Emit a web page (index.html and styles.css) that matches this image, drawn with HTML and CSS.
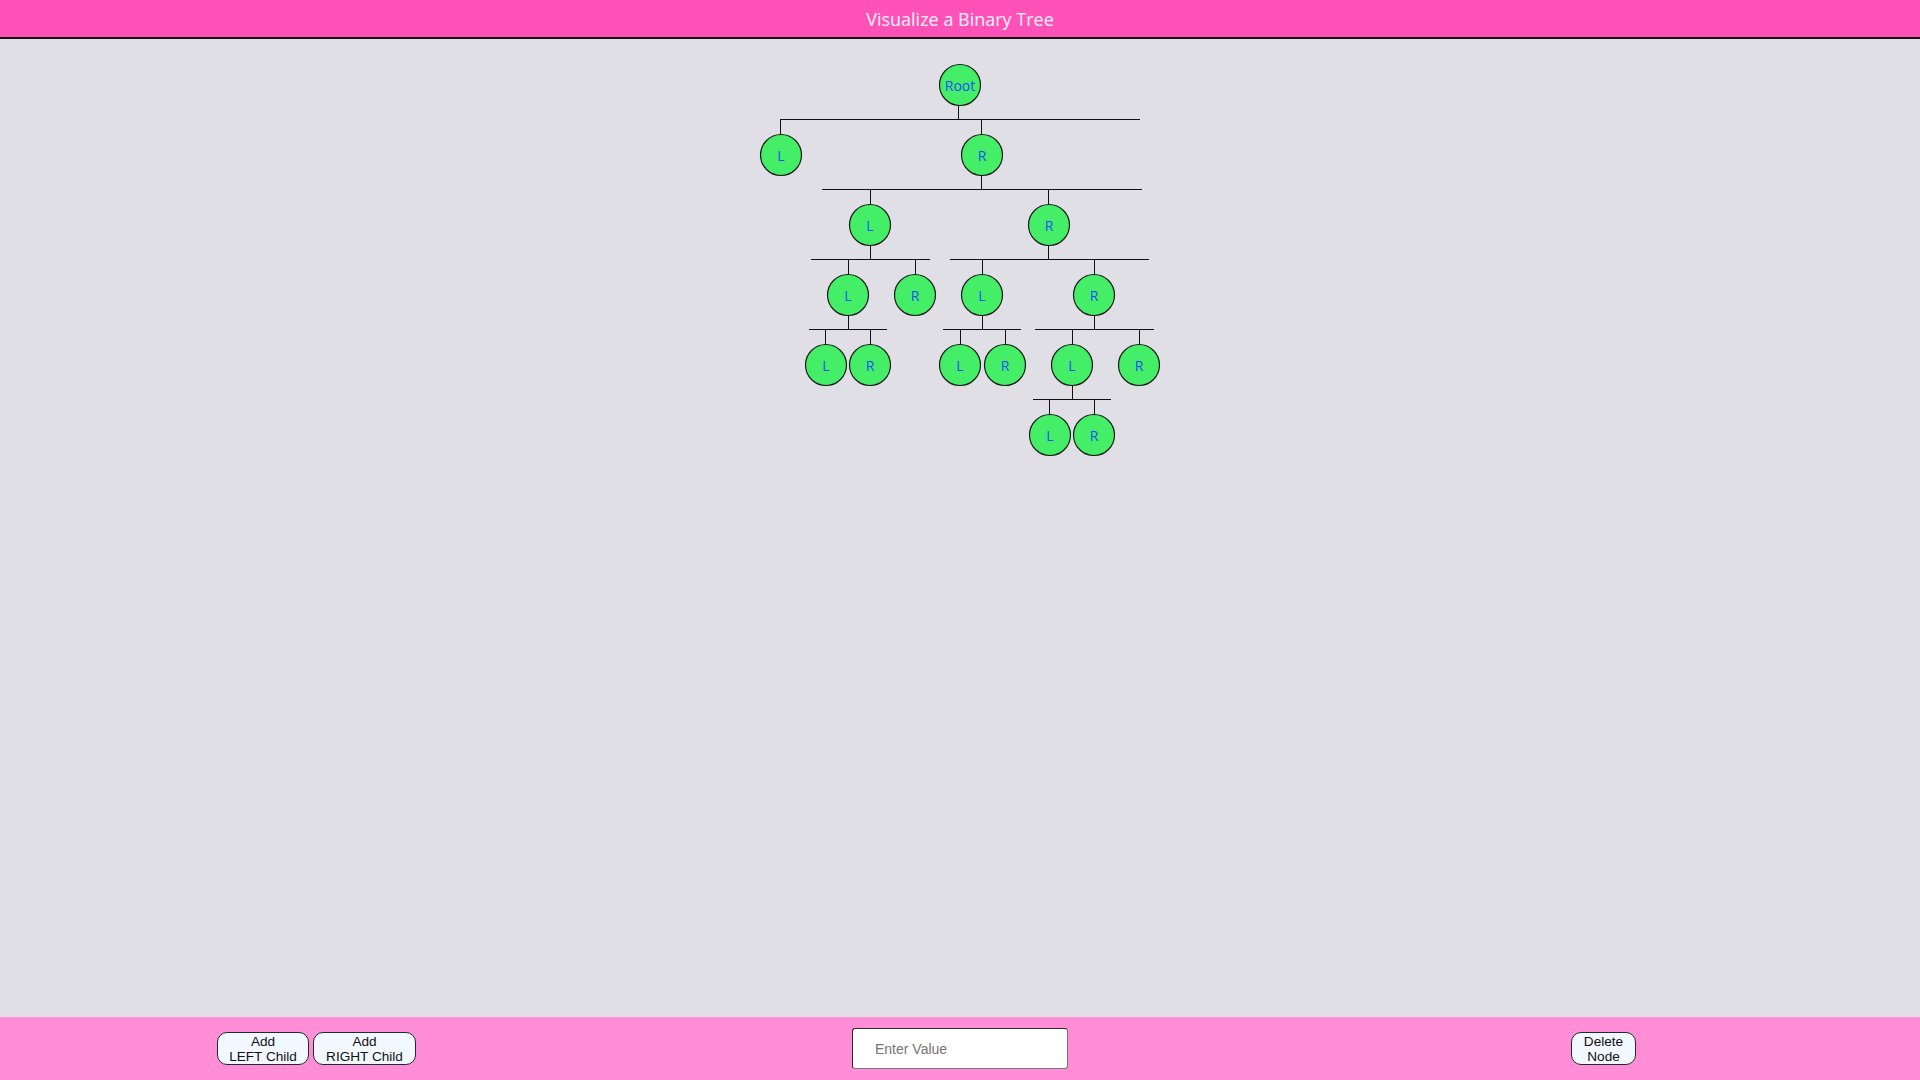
FILE: index.html
```html
<!DOCTYPE html>
<html lang="en">
<head>
<meta charset="utf-8">
<title>Visualize a Binary Tree</title>
<link rel="stylesheet" href="styles.css">
</head>
<body>
<div class="app">
  <header class="topbar">Visualize a Binary Tree</header>
  <main class="stage">
    <svg class="tree" width="1920" height="978" viewBox="0 39 1920 978" xmlns="http://www.w3.org/2000/svg">
      <g class="links">
        <path d="M780 119.5H1140 M822 189.5H1142 M811 259.5H930 M950 259.5H1149 M809 329.5H887 M943 329.5H1021 M1035 329.5H1154 M1033 399.5H1111"/>
        <path d="M958.5 105V119 M780.5 119V135 M981.5 119V135
                 M981.5 175V189 M870.5 189V205 M1048.5 189V205
                 M870.5 245V259 M1048.5 245V259 M848.5 259V275 M915.5 259V275 M982.5 259V275 M1094.5 259V275
                 M848.5 315V329 M982.5 315V329 M1094.5 315V329 M825.5 329V345 M870.5 329V345 M960.5 329V345 M1005.5 329V345 M1072.5 329V345 M1139.5 329V345
                 M1072.5 385V399 M1049.5 399V415 M1094.5 399V415"/>
      </g>
      <g class="node"><circle cx="960" cy="85" r="20.5"/><text x="960" y="85">Root</text></g>
      <g class="node"><circle cx="781" cy="155" r="20.5"/><text x="781" y="155">L</text></g>
      <g class="node"><circle cx="982" cy="155" r="20.5"/><text x="982" y="155">R</text></g>
      <g class="node"><circle cx="870" cy="225" r="20.5"/><text x="870" y="225">L</text></g>
      <g class="node"><circle cx="1049" cy="225" r="20.5"/><text x="1049" y="225">R</text></g>
      <g class="node"><circle cx="848" cy="295" r="20.5"/><text x="848" y="295">L</text></g>
      <g class="node"><circle cx="915" cy="295" r="20.5"/><text x="915" y="295">R</text></g>
      <g class="node"><circle cx="982" cy="295" r="20.5"/><text x="982" y="295">L</text></g>
      <g class="node"><circle cx="1094" cy="295" r="20.5"/><text x="1094" y="295">R</text></g>
      <g class="node"><circle cx="826" cy="365" r="20.5"/><text x="826" y="365">L</text></g>
      <g class="node"><circle cx="870" cy="365" r="20.5"/><text x="870" y="365">R</text></g>
      <g class="node"><circle cx="960" cy="365" r="20.5"/><text x="960" y="365">L</text></g>
      <g class="node"><circle cx="1005" cy="365" r="20.5"/><text x="1005" y="365">R</text></g>
      <g class="node"><circle cx="1072" cy="365" r="20.5"/><text x="1072" y="365">L</text></g>
      <g class="node"><circle cx="1139" cy="365" r="20.5"/><text x="1139" y="365">R</text></g>
      <g class="node"><circle cx="1050" cy="435" r="20.5"/><text x="1050" y="435">L</text></g>
      <g class="node"><circle cx="1094" cy="435" r="20.5"/><text x="1094" y="435">R</text></g>
    </svg>
  </main>
  <footer class="controls">
    <div class="cell">
      <div class="btn-group">
        <button class="btn btn-left">Add<br>LEFT Child</button>
        <button class="btn btn-right">Add<br>RIGHT Child</button>
      </div>
    </div>
    <div class="cell">
      <input class="value-input" type="text" placeholder="Enter Value">
    </div>
    <div class="cell">
      <button class="btn btn-delete">Delete<br>Node</button>
    </div>
  </footer>
</div>
</body>
</html>
```
FILE: styles.css
```css
* { box-sizing: border-box; }
html, body {
  margin: 0;
  padding: 0;
  width: 1920px;
  height: 1080px;
  overflow: hidden;
}
body {
  font-family: "Open Sans", "Liberation Sans", sans-serif;
  background: #e0dfe6;
}
.app {
  display: flex;
  flex-direction: column;
  height: 1080px;
}
.topbar {
  height: 39px;
  background: #ff52b8;
  border-bottom: 2px solid #111;
  color: #fff4fb;
  font-size: 18px;
  display: flex;
  align-items: center;
  justify-content: center;
  padding-top: 1px;
}
.stage {
  flex: 1;
  background: #e0dfe6;
  overflow: hidden;
}
.tree {
  display: block;
}
.links path {
  stroke: #111;
  stroke-width: 1;
  fill: none;
  shape-rendering: crispEdges;
}
.node circle {
  fill: #44ee66;
  stroke: #1a1a1a;
  stroke-width: 1.2;
}
.node text {
  fill: #1b50ff;
  font-family: "Open Sans", "Liberation Sans", sans-serif;
  font-size: 14px;
  text-anchor: middle;
  dominant-baseline: central;
}
.controls {
  height: 63px;
  background: #ff8ed6;
  display: grid;
  grid-template-columns: 1fr 1fr 1fr;
  align-items: center;
}
.cell {
  display: flex;
  justify-content: center;
  align-items: center;
}
.btn-group {
  display: flex;
  gap: 4px;
  margin-right: 7px;
}
.btn {
  font-family: "Liberation Sans", Arial, sans-serif;
  font-size: 13.6px;
  line-height: 15px;
  color: #111;
  background: #f2f8ff;
  border: 1px solid #1e2a33;
  border-radius: 10px;
  padding: 1px 0;
  height: 33px;
  text-align: center;
}
.btn-left { width: 92px; }
.btn-right { width: 103px; }
.btn-delete { width: 65px; margin-left: 7px; }
.value-input {
  width: 216px;
  height: 41px;
  font-family: "Liberation Sans", Arial, sans-serif;
  font-size: 14px;
  padding: 0 10px 0 22px;
  background: #fff;
  border: 1px solid;
  border-color: #2a2a2a #777 #777 #2a2a2a;
  border-radius: 3px;
  outline: none;
}
.value-input::placeholder {
  color: #757575;
}
```
